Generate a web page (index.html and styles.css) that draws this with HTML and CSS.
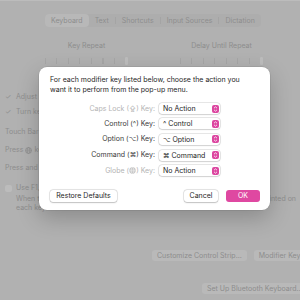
FILE: index.html
```html
<!DOCTYPE html>
<html>
<head>
<meta charset="utf-8">
<link rel="stylesheet" href="styles.css">
</head>
<body>
<div class="window">
  <div class="tabs">
    <div class="seg">
      <span class="tab sel">Keyboard</span>
      <span class="tab">Text</span>
      <span class="sep"></span>
      <span class="tab">Shortcuts</span>
      <span class="sep"></span>
      <span class="tab">Input Sources</span>
      <span class="sep"></span>
      <span class="tab">Dictation</span>
    </div>
  </div>
  <div class="repeat">
    <div class="rcol">
      <div class="rlabel">Key Repeat</div>
      <div class="slider"></div>
    </div>
    <div class="rcol right">
      <div class="rlabel">Delay Until Repeat</div>
      <div class="slider"></div>
    </div>
  </div>
  <div class="opts">
    <div class="opt o1"><span class="chk">✓</span>Adjust keyboard brightness in low light</div>
    <div class="opt o2"><span class="chk">✓</span>Turn keyboard backlight off after 5 secs of inactivity</div>
    <div class="opt o3">Touch Bar shows</div>
    <div class="opt o4">Press <svg class="glb" viewBox="0 0 10 10"><circle cx="5" cy="5" r="4.3" fill="none" stroke="#8c8c8c" stroke-width="1"/><ellipse cx="5" cy="5" rx="1.8" ry="4.3" fill="none" stroke="#8c8c8c" stroke-width="0.8"/><path d="M0.8 5H9.2M1.6 3H8.4M1.6 7H8.4" stroke="#8c8c8c" stroke-width="0.7"/></svg> key to</div>
    <div class="opt o5">Press and hold key to</div>
    <div class="opt o6"><span class="box"></span>Use F1, F2, etc. keys as standard function keys</div>
    <div class="opt o7 split"><span>When this option is selected, press the Fn key to use the special features</span><span class="pr">printed on</span></div>
    <div class="opt o8">each key.</div>
  </div>
  <div class="btnrow r1">
    <span class="gbtn">Customize Control Strip…</span>
    <span class="gbtn">Modifier Keys…</span>
  </div>
  <div class="btnrow r2">
    <span class="gbtn">Set Up Bluetooth Keyboard…</span>
  </div>
</div>

<div class="sheet">
  <div class="msg">For each modifier key listed below, choose the action you want it to perform from the pop-up menu.</div>
  <div class="rows">
    <div class="lab dim">Caps Lock (⇪) Key:</div>
    <div class="pop"><span>No Action</span><span class="step"><svg viewBox="0 0 7 8"><path d="M2 3.2L3.5 1.8L5 3.2M2 4.8L3.5 6.2L5 4.8" fill="none" stroke="#fff" stroke-width="0.8"/></svg></span></div>
    <div class="lab">Control (^) Key:</div>
    <div class="pop"><span>^ Control</span><span class="step"><svg viewBox="0 0 7 8"><path d="M2 3.2L3.5 1.8L5 3.2M2 4.8L3.5 6.2L5 4.8" fill="none" stroke="#fff" stroke-width="0.8"/></svg></span></div>
    <div class="lab">Option (<span class="sym">⌥</span>) Key:</div>
    <div class="pop"><span><span class="sym">⌥</span> Option</span><span class="step"><svg viewBox="0 0 7 8"><path d="M2 3.2L3.5 1.8L5 3.2M2 4.8L3.5 6.2L5 4.8" fill="none" stroke="#fff" stroke-width="0.8"/></svg></span></div>
    <div class="lab">Command (<span class="sym">⌘</span>) Key:</div>
    <div class="pop"><span><span class="sym">⌘</span> Command</span><span class="step"><svg viewBox="0 0 7 8"><path d="M2 3.2L3.5 1.8L5 3.2M2 4.8L3.5 6.2L5 4.8" fill="none" stroke="#fff" stroke-width="0.8"/></svg></span></div>
    <div class="lab dim">Globe (<svg class="glb2" viewBox="0 0 10 10"><circle cx="5" cy="5" r="4.5" fill="#bdbdbd"/><ellipse cx="5" cy="5" rx="1.8" ry="4.2" fill="none" stroke="#fff" stroke-width="0.6"/><path d="M0.8 5H9.2M1.4 3H8.6M1.4 7H8.6" stroke="#fff" stroke-width="0.6"/></svg>) Key:</div>
    <div class="pop"><span>No Action</span><span class="step"><svg viewBox="0 0 7 8"><path d="M2 3.2L3.5 1.8L5 3.2M2 4.8L3.5 6.2L5 4.8" fill="none" stroke="#fff" stroke-width="0.8"/></svg></span></div>
  </div>
  <div class="actions">
    <span class="btn restore">Restore Defaults</span>
    <span class="fill"></span>
    <span class="btn cancel">Cancel</span>
    <span class="btn ok">OK</span>
  </div>
</div>
</body>
</html>
```
FILE: styles.css
```css
html, body {
  margin: 0;
  padding: 0;
}
body {
  width: 300px;
  height: 300px;
  overflow: hidden;
  position: relative;
  background: #b1b1b1;
  border-top: 1px solid #bcbcbc;
  box-sizing: border-box;
  font-family: Inter, "Noto Sans", sans-serif;
  font-size: 7px;
  color: #8d8d8d;
}
.window {
  width: 340px;
}
.tabs {
  padding-top: 13px;
  padding-left: 45px;
  display: flex;
}
.seg {
  display: flex;
  align-items: center;
  height: 13px;
  background: #adadad;
  border-radius: 4px;
}
.tab {
  padding: 0 6px;
  line-height: 13px;
  white-space: nowrap;
}
.tab.sel {
  background: #b8b8b8;
  border-radius: 4px;
}
.sep {
  width: 1px;
  height: 7px;
  background: #a4a4a4;
}
.repeat {
  display: flex;
  padding-left: 45px;
  margin-top: 14px;
}
.rcol {
  width: 83px;
  display: flex;
  flex-direction: column;
  align-items: center;
}
.rcol.right {
  margin-left: 52px;
}
.rlabel {
  line-height: 10px;
  white-space: nowrap;
}
.slider {
  width: 83px;
  height: 6px;
  margin-top: 7px;
  position: relative;
  background: repeating-linear-gradient(to right, #a6a6a6 0, #a6a6a6 1px, transparent 1px, transparent 11.5px);
}
.slider::after {
  content: "";
  position: absolute;
  right: 0;
  top: -1px;
  width: 3px;
  height: 8px;
  background: #bdbdbd;
  border-radius: 1px;
}
.opts {
  padding-left: 5px;
  margin-top: 28px;
}
.opt {
  line-height: 10px;
  white-space: nowrap;
  display: flex;
  align-items: center;
}
.chk {
  width: 11px;
  color: #8d8d8d;
}
.o2 { margin-top: 5px; }
.o3 { margin-top: 10px; }
.o4 { margin-top: 8px; }
.o5 { margin-top: 8px; }
.o6 { margin-top: 10px; }
.o7 { padding-left: 11px; margin-top: 1px; }
.o8 { padding-left: 11px; margin-top: -1px; }
.split {
  width: 280px;
  justify-content: space-between;
}
.box {
  width: 7px;
  height: 7px;
  border-radius: 2px;
  background: #bcbcbc;
  margin-right: 4px;
}
.glb {
  width: 7px;
  height: 7px;
  margin: 0 2px;
}
.btnrow {
  display: flex;
  gap: 7px;
  white-space: nowrap;
}
.r1 {
  padding-left: 152px;
  margin-top: 37px;
}
.r2 {
  padding-left: 202px;
  margin-top: 22px;
}
.gbtn {
  height: 11px;
  line-height: 11px;
  padding: 0 5px;
  background: #b9b9b9;
  border-radius: 3px;
}
.sheet {
  position: absolute;
  left: 39px;
  top: 66px;
  width: 231px;
  height: 143px;
  box-sizing: border-box;
  padding: 8px 10px 10px 11px;
  background: #ffffff;
  border-radius: 8px;
  box-shadow: 0 8px 22px rgba(0, 0, 0, 0.22), 0 0 0 0.5px rgba(0, 0, 0, 0.12);
  color: #262626;
  display: flex;
  flex-direction: column;
}
.msg {
  line-height: 10px;
  padding-right: 20px;
}
.rows {
  display: grid;
  grid-template-columns: 105px 61px;
  column-gap: 4px;
  row-gap: 4px;
  align-items: center;
  margin-top: 8px;
}
.lab {
  text-align: right;
  white-space: nowrap;
  color: #3a3a3a;
  line-height: 11px;
}
.lab.dim {
  color: #b4b4b4;
}
.sym {
  font-family: "DejaVu Sans", sans-serif;
  font-size: 6.5px;
}
.glb2 {
  width: 7px;
  height: 7px;
  vertical-align: -1px;
}
.pop {
  height: 11px;
  box-sizing: border-box;
  border-radius: 3px;
  background: #fff;
  box-shadow: 0 0 0 0.5px rgba(0, 0, 0, 0.16), 0 0.5px 1.5px rgba(0, 0, 0, 0.18);
  display: flex;
  align-items: center;
  justify-content: space-between;
  padding: 0 1px 0 4px;
  white-space: nowrap;
  color: #1e1e1e;
}
.step {
  width: 7px;
  height: 8px;
  background: #dc46a0;
  border-radius: 2px;
  display: flex;
}
.step svg {
  width: 7px;
  height: 8px;
}
.actions {
  display: flex;
  margin-top: 13.5px;
  align-items: center;
}
.fill {
  flex: 1;
}
.btn {
  height: 12px;
  line-height: 12px;
  border-radius: 3px;
  background: #fff;
  box-shadow: 0 0 0 0.5px rgba(0, 0, 0, 0.16), 0 0.5px 1.5px rgba(0, 0, 0, 0.18);
  text-align: center;
  white-space: nowrap;
  color: #262626;
}
.restore {
  width: 67px;
}
.cancel {
  width: 34px;
  margin-right: 8px;
}
.ok {
  width: 34px;
  background: #df48a1;
  color: #fff;
  box-shadow: none;
}
```
